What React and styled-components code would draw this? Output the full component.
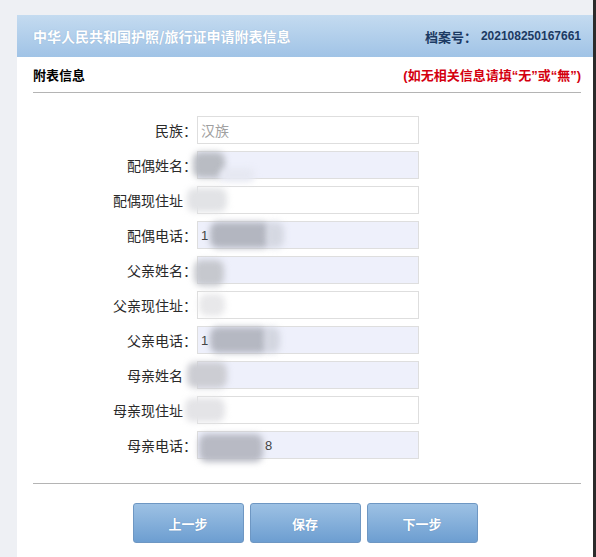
import React from "react";
import styled, { createGlobalStyle } from "styled-components";

const Global = createGlobalStyle`
  html, body { margin: 0; padding: 0; }
  body {
    background: #eef0f4;
    font-family: "Noto Sans CJK SC", "Noto Sans", sans-serif;
  }
`;

const Page = styled.div`
  width: 596px;
  height: 557px;
  box-sizing: border-box;
  padding: 15px 0 0 17px;
  border-right: 3px solid #2b2b2b;
  background: #eef0f4;
`;

const Panel = styled.div`
  height: 100%;
  background: #fff;
  display: flex;
  flex-direction: column;
`;

const Header = styled.div`
  height: 42px;
  flex: none;
  background: linear-gradient(#c4dbf0, #a0c3e6);
  padding: 0 12px 0 16px;
  display: flex;
  align-items: center;
  justify-content: space-between;
`;

const Title = styled.div`
  color: #fff;
  font-size: 14px;
  font-weight: bold;
  text-shadow: 0 0 1px rgba(60, 100, 150, 0.35);
`;

const FileNo = styled.div`
  color: #1c3a63;
  font-size: 13px;
  font-weight: bold;
  display: flex;
  align-items: center;
  gap: 4px;
`;

const Num = styled.span`
  font-family: "Liberation Sans", Arial, sans-serif;
  font-size: 12px;
`;

const SubHead = styled.div`
  height: 35px;
  flex: none;
  margin: 0 12px 0 16px;
  border-bottom: 1px solid #b4b4b4;
  display: flex;
  align-items: center;
  justify-content: space-between;
`;

const SubTitle = styled.div`
  font-size: 13px;
  color: #000;
  font-weight: 600;
`;

const Note = styled.div`
  font-size: 13px;
  color: #d40010;
  font-weight: bold;
  font-family: "Liberation Sans", "Noto Sans CJK SC", sans-serif;
`;

const Form = styled.div`
  margin: 0 12px 0 16px;
  padding: 23px 0 24px;
  border-bottom: 1px solid #b4b4b4;
  display: flex;
  flex-direction: column;
  gap: 7px;
`;

const Row = styled.div`
  display: flex;
  align-items: center;
  height: 28px;
`;

const Label = styled.div`
  width: 164px;
  flex: none;
  text-align: right;
  font-size: 14px;
  color: #2a2a2a;
  white-space: nowrap;
`;

const Colon = styled.span`
  color: ${(p) => (p.$hidden ? "transparent" : "inherit")};
`;

const Field = styled.div`
  width: 222px;
  height: 28px;
  box-sizing: border-box;
  border: 1px solid #dedede;
  background: ${(p) => (p.$tint ? "#eef0fb" : "#fff")};
  display: flex;
  align-items: center;
  padding-left: 1px;
  font-size: 13px;
  color: #444;
  font-family: "Liberation Sans", Arial, sans-serif;
`;

const Value = styled.span`
  color: ${(p) => p.$color || "#444"};
  font-family: ${(p) => (p.$cjk ? '"Noto Sans CJK SC", sans-serif' : "inherit")};
  font-size: ${(p) => (p.$cjk ? "14px" : "13px")};
  padding-left: 2px;
  position: relative;
  z-index: 1;
`;

const Blob = styled.span`
  display: inline-block;
  flex: none;
  width: ${(p) => p.$w}px;
  height: ${(p) => p.$h || 24}px;
  margin-left: ${(p) => p.$ml || 0}px;
  margin-top: ${(p) => p.$mt || 0}px;
  background: ${(p) => p.$c};
  border-radius: 8px;
  filter: blur(3px);
`;

const Actions = styled.div`
  display: flex;
  justify-content: center;
  gap: 6px;
  padding-top: 19px;
`;

const Button = styled.button`
  width: 111px;
  height: 40px;
  border: 1px solid #6e97c3;
  border-radius: 3px;
  background: linear-gradient(#9dc1e4, #6d9ed1);
  color: #fff;
  font-size: 13px;
  font-weight: bold;
  font-family: "Noto Sans CJK SC", sans-serif;
  text-shadow: 0 0 1px rgba(40, 80, 130, 0.4);
  cursor: pointer;
`;

const rows = [
  { label: "民族", tint: false, content: <Value $cjk $color="#a0a0a0">汉族</Value> },
  {
    label: "配偶姓名",
    tint: true,
    content: (
      <>
        <Blob $w={32} $ml={-6} $c="#b9bcc3" $h={26} />
        <Blob $w={36} $ml={-6} $c="#e6e8f2" $h={14} $mt={20} />
      </>
    ),
  },
  { label: "配偶现住址", tint: false, hideColon: true, content: <Blob $w={40} $ml={-12} $c="#e2e3e6" $h={24} /> },
  {
    label: "配偶电话",
    tint: true,
    content: (
      <>
        <Value>1</Value>
        <Blob $w={60} $ml={2} $c="#b3b6c0" $h={26} />
        <Blob $w={18} $ml={-4} $c="#d5d8e2" $h={26} />
      </>
    ),
  },
  { label: "父亲姓名", tint: true, content: <Blob $w={30} $ml={-5} $c="#c6c8ce" $h={26} $mt={6} /> },
  { label: "父亲现住址", tint: false, content: <Blob $w={26} $ml={0} $c="#e8e8ea" $h={22} /> },
  {
    label: "父亲电话",
    tint: true,
    content: (
      <>
        <Value>1</Value>
        <Blob $w={58} $ml={2} $c="#b5b8c2" $h={26} />
        <Blob $w={16} $ml={-4} $c="#d3d6e0" $h={26} />
      </>
    ),
  },
  { label: "母亲姓名", tint: true, hideColon: true, content: <Blob $w={40} $ml={-12} $c="#cccdd3" $h={26} /> },
  { label: "母亲现住址", tint: false, hideColon: true, content: <Blob $w={40} $ml={-14} $c="#e4e4e7" $h={24} /> },
  {
    label: "母亲电话",
    tint: true,
    content: (
      <>
        <Blob $w={64} $ml={0} $c="#b8bac4" $h={28} $mt={6} />
        <Value>8</Value>
      </>
    ),
  },
];

export default function App() {
  return (
    <>
      <Global />
      <Page>
        <Panel>
          <Header>
            <Title>中华人民共和国护照/旅行证申请附表信息</Title>
            <FileNo>
              档案号：<Num>202108250167661</Num>
            </FileNo>
          </Header>
          <SubHead>
            <SubTitle>附表信息</SubTitle>
            <Note>(如无相关信息请填“无”或“無”)</Note>
          </SubHead>
          <Form>
            {rows.map((r) => (
              <Row key={r.label}>
                <Label>
                  {r.label}
                  <Colon $hidden={r.hideColon}>：</Colon>
                </Label>
                <Field $tint={r.tint}>{r.content}</Field>
              </Row>
            ))}
          </Form>
          <Actions>
            <Button>上一步</Button>
            <Button>保存</Button>
            <Button>下一步</Button>
          </Actions>
        </Panel>
      </Page>
    </>
  );
}
